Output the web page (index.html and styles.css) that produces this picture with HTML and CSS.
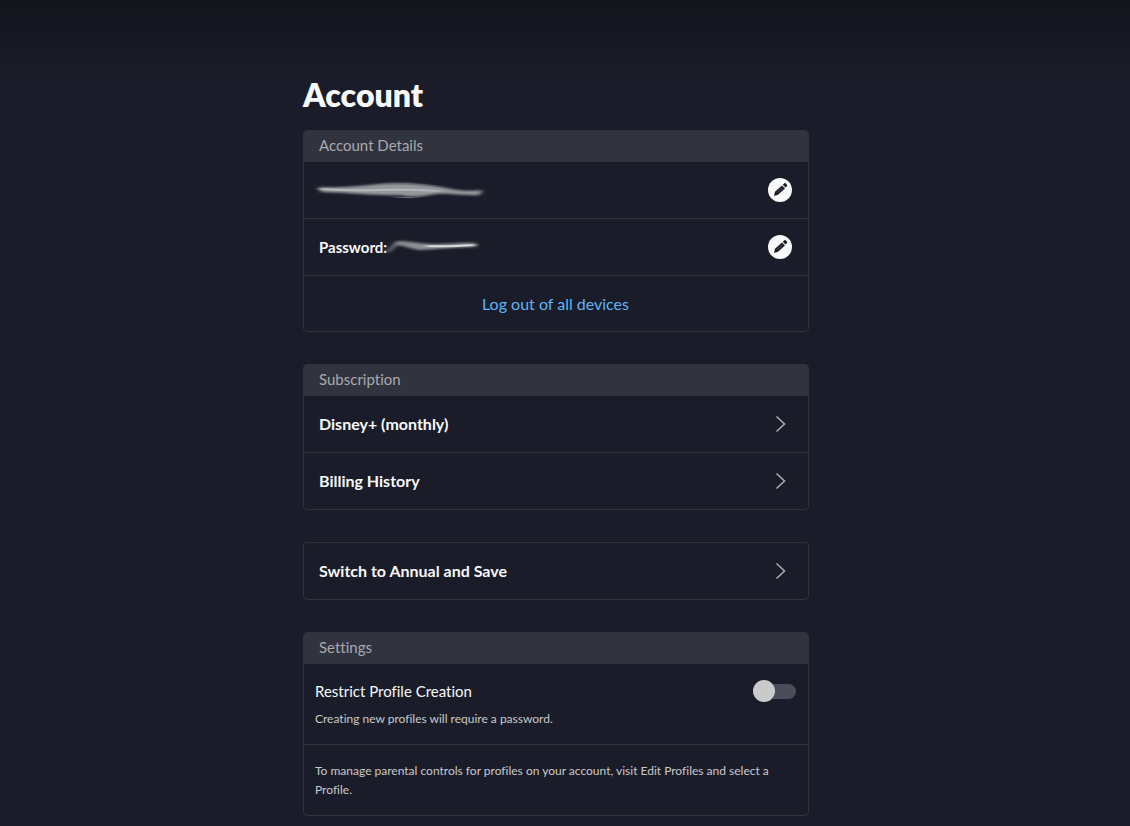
FILE: index.html
```html
<!DOCTYPE html>
<html lang="en">
<head>
<meta charset="utf-8">
<meta name="viewport" content="width=device-width, initial-scale=1">
<title>Account</title>
<link rel="stylesheet" href="styles.css">
</head>
<body>
<svg class="symbols" aria-hidden="true">
  <symbol id="pencil" viewBox="0 0 24 24">
    <circle cx="12" cy="12" r="12" fill="#f9f9f9"/>
    <g fill="#1a1d29">
      <path d="M6 18l1-4.200 7-6.300 3 3.100-7 6.200z"/>
      <path d="M14.800 6.700l1.600-1.500q.7-.5 1.300.1l1.300 1.400q.6.700 0 1.300l-1.500 1.500z"/>
    </g>
    <path d="M9.300 14.600l5.300-4.900" stroke="#6a6c74" stroke-width=".6"/>
  </symbol>
  <symbol id="chevron" viewBox="0 0 24 24">
    <path d="M8.500 4.500l8 7.500-8 7.500" fill="none" stroke="#a9aab0" stroke-width="1.600"/>
  </symbol>
</svg>
<main class="page">
  <h1 class="title">Account</h1>

  <section class="card">
    <h2 class="card-header">Account Details</h2>
    <div class="row">
      <svg class="smudge smudge-email" viewBox="0 0 176 24" role="img" aria-label="Hidden email">
        <defs>
          <filter id="soft" x="-10%" y="-60%" width="120%" height="220%"><feGaussianBlur stdDeviation="2.500 1"/></filter>
          <filter id="fine" x="-10%" y="-60%" width="120%" height="220%"><feGaussianBlur stdDeviation="3 .7"/></filter>
        </defs>
        <path filter="url(#soft)" fill="#96979c" d="M-1 9C22 10 40 8 60 6C86 4 106 7 122 9C138 12 148 14 163 12L161 17C142 18 132 15 118 16C102 18 92 20 82 17C58 18 38 15 2 14Z"/>
        <path filter="url(#fine)" fill="none" stroke="#b6b7bb" stroke-width="2" d="M2 11Q32 13 60 12T120 13"/>
        <path filter="url(#fine)" fill="none" stroke="#6c6e76" d="M64 6Q92 5 114 8M76 19Q90 21 104 18"/>
      </svg>
      <button class="icon-button" type="button" aria-label="Edit email"><svg class="icon"><use href="#pencil"/></svg></button>
    </div>
    <div class="row">
      <div class="password">
        <span class="row-label password-label">Password:</span>
        <svg class="smudge smudge-password" viewBox="0 0 96 24" role="img" aria-label="Hidden password">
          <path filter="url(#soft)" fill="#8d8e94" d="M0 16L10 6C24 6 34 9 46 9C62 9 74 7 89 8L89 12C66 12 46 15 33 15C23 14 16 10 10 10L1 18Z"/>
          <path filter="url(#fine)" fill="none" stroke="#dcdcde" stroke-width="2" d="M40 11Q60 12 87 10"/>
        </svg>
      </div>
      <button class="icon-button" type="button" aria-label="Edit password"><svg class="icon"><use href="#pencil"/></svg></button>
    </div>
    <div class="row row-center"><a class="link" href="#">Log out of all devices</a></div>
  </section>

  <section class="card">
    <h2 class="card-header">Subscription</h2>
    <a class="row" href="#"><span class="row-label">Disney+ (monthly)</span><svg class="icon" aria-hidden="true"><use href="#chevron"/></svg></a>
    <a class="row" href="#"><span class="row-label">Billing History</span><svg class="icon" aria-hidden="true"><use href="#chevron"/></svg></a>
  </section>

  <section class="card">
    <a class="row" href="#"><span class="row-label">Switch to Annual and Save</span><svg class="icon" aria-hidden="true"><use href="#chevron"/></svg></a>
  </section>

  <section class="card">
    <h2 class="card-header">Settings</h2>
    <div class="setting">
      <div class="setting-head">
        <label class="setting-label" for="restrict">Restrict Profile Creation</label>
        <input class="toggle" id="restrict" type="checkbox" role="switch">
      </div>
      <p class="note">Creating new profiles will require a password.</p>
    </div>
    <div class="setting"><p class="note">To manage parental controls for profiles on your account, visit Edit Profiles and select a Profile.</p></div>
  </section>
</main>
</body>
</html>
```
FILE: styles.css
```css
* {
  box-sizing: border-box;
}

body {
  margin: 0;
  min-height: 100vh;
  padding: 0 18px 0 0;
  background: #1a1d29 linear-gradient(#12151c, #1a1d29 80px) no-repeat;
  color: #f9f9f9;
  font: 15px/24px Lato, "Open Sans", sans-serif;
  font-variant-ligatures: none;
}

.symbols {
  display: none;
}

.page {
  display: flex;
  flex-direction: column;
  gap: 32px;
  max-width: 506px;
  margin: 0 auto;
  padding: 75px 0 10px;
}

.title {
  margin: 0 0 -17px;
  font-size: 32px;
  line-height: 40px;
  font-weight: 800;
}

.card {
  border: 1px solid #30323e;
  border-radius: 4px;
  overflow: hidden;
}

.card-header {
  margin: 0;
  padding: 2px 15px 5px;
  background: #31333f;
  color: #a8a9ad;
  font-size: 15px;
  line-height: 24px;
  font-weight: 400;
}

.row {
  display: flex;
  align-items: center;
  justify-content: space-between;
  min-height: 56px;
  padding: 0 16px 0 15px;
  color: inherit;
  text-decoration: none;
}

.row + .row,
.setting + .setting {
  border-top: 1px solid #30323e;
}

.row + .row {
  min-height: 57px;
}

.row + .row-center {
  justify-content: center;
  min-height: 56px;
}

.row-label {
  font-size: 16px;
  font-weight: 700;
}

.password {
  display: flex;
  align-items: center;
}

.password-label {
  font-size: 15px;
}

.smudge {
  display: block;
  height: 24px;
  overflow: visible;
}

.smudge-email {
  width: 176px;
}

.smudge-password {
  width: 96px;
}

.icon-button {
  padding: 0;
  border: 0;
  border-radius: 50%;
  background: none;
  cursor: pointer;
}

.icon {
  display: block;
  width: 24px;
  height: 24px;
}

.link {
  color: #5fb4f5;
  font-size: 16px;
  text-decoration: none;
}

.setting {
  padding: 16px 12px 16px 11px;
}

.setting-head {
  display: flex;
  align-items: center;
  justify-content: space-between;
  margin-bottom: 7px;
}

.setting-label {
  line-height: 22px;
}

.note {
  margin: 0;
  color: #cacaca;
  font-size: 12px;
  line-height: 19px;
}

.toggle {
  appearance: none;
  display: flex;
  align-items: center;
  width: 43px;
  height: 15px;
  margin: 0;
  border-radius: 8px;
  background: #4b4e5a;
  cursor: pointer;
}

.toggle::before {
  content: "";
  flex: none;
  width: 22px;
  height: 22px;
  border-radius: 50%;
  background: #cacaca;
}

.toggle:checked {
  justify-content: flex-end;
}
```
